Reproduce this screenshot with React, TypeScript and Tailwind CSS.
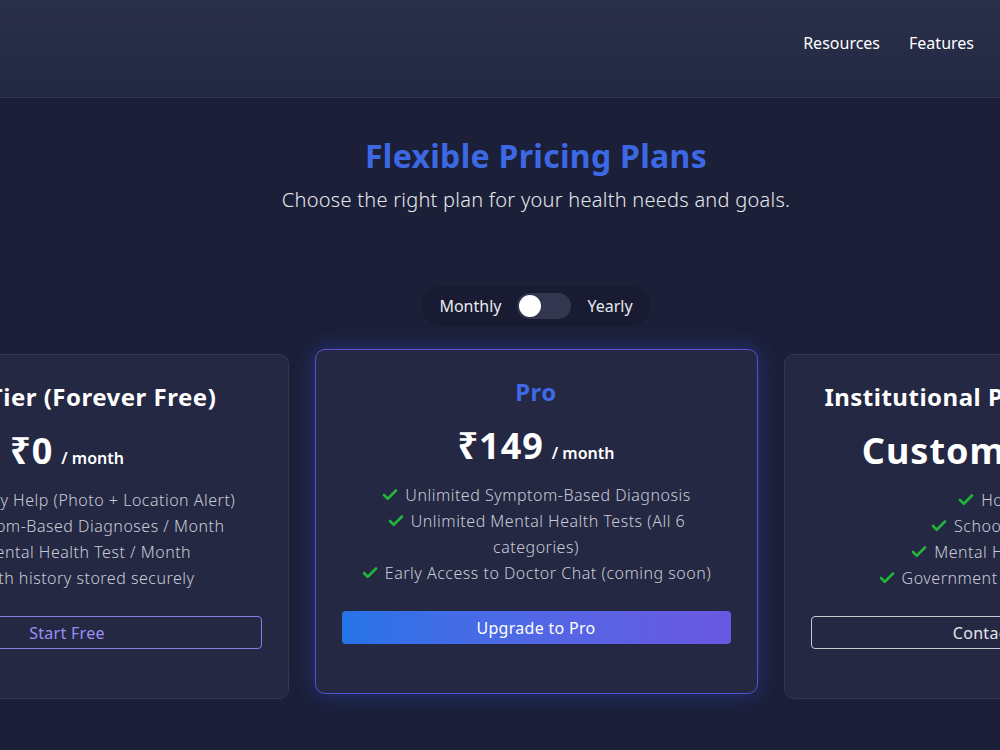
import { useState } from 'react'
import { Check } from 'lucide-react'

type Plan = {
  name: string
  price: string
  unit?: string
  features: string[]
  cta: string
  variant: 'free' | 'pro' | 'custom'
}

const PLANS: Plan[] = [
  {
    name: 'Basic Tier (Forever Free)',
    price: '₹0',
    unit: '/ month',
    features: [
      'Emergency Help (Photo + Location Alert)',
      '3 Symptom-Based Diagnoses / Month',
      '1 Mental Health Test / Month',
      'Health history stored securely',
    ],
    cta: 'Start Free',
    variant: 'free',
  },
  {
    name: 'Pro',
    price: '₹149',
    unit: '/ month',
    features: [
      'Unlimited Symptom-Based Diagnosis',
      'Unlimited Mental Health Tests (All 6 categories)',
      'Early Access to Doctor Chat (coming soon)',
    ],
    cta: 'Upgrade to Pro',
    variant: 'pro',
  },
  {
    name: 'Institutional Plan (B2B / B2G)',
    price: 'Custom pricing',
    features: ['Hospitals', 'Schools & NGOs', 'Mental Health Camps', 'Government Health Programs'],
    cta: 'Contact Sales',
    variant: 'custom',
  },
]

function PlanCard({ plan }: { plan: Plan }) {
  const isPro = plan.variant === 'pro'
  return (
    <div
      className={[
        'w-[443px] shrink-0 rounded-[10px] px-[26px] pt-[26px] pb-[49px] flex flex-col items-center',
        isPro
          ? 'bg-[#242843] border border-[#5a4fd6] -translate-y-[5px] shadow-[0_0_22px_rgba(45,80,200,0.45)]'
          : 'bg-[#242843] border border-[#33374f]',
      ].join(' ')}
    >
      <h3
        className={[
          'text-[24px] leading-8 font-bold whitespace-nowrap tracking-[0.5px]',
          isPro ? 'text-[#3e6ae6]' : 'text-white',
        ].join(' ')}
      >
        {plan.name}
      </h3>
      <div className="mt-4 h-[44px] flex items-baseline gap-2 whitespace-nowrap text-white">
        <span className="text-[36px] leading-[44px] font-bold tracking-[1px]">{plan.price}</span>
        {plan.unit && <span className="text-[16px] font-semibold">{plan.unit}</span>}
      </div>
      <ul className="mt-[14px] w-full px-3 text-center text-[16px] leading-[26px] font-light tracking-[0.5px] text-[#c9cbd6]">
        {plan.features.map((f) => (
          <li key={f}>
            <Check size={18} strokeWidth={3.5} className="inline-block text-[#22b33a] mr-1.5 -mt-1 align-middle" />
            {f}
          </li>
        ))}
      </ul>
      <button
        className={[
          'mt-[25px] w-full h-[33px] rounded text-[16px] tracking-[0.3px]',
          plan.variant === 'pro' && 'bg-gradient-to-r from-[#2474e8] to-[#6a58e2] text-white',
          plan.variant === 'free' && 'border border-[#8a7ce8] text-[#9d8ef5]',
          plan.variant === 'custom' && 'border border-[#c9cad2] text-[#e4e5ea]',
        ]
          .filter(Boolean)
          .join(' ')}
      >
        {plan.cta}
      </button>
    </div>
  )
}

export default function App() {
  const [yearly, setYearly] = useState(false)

  return (
    <div
      className="min-h-[750px] w-full overflow-hidden bg-[#1b1f38] text-white"
      style={{ fontFamily: '"Noto Sans", "Open Sans", sans-serif' }}
    >
      <header className="h-[98px] border-b border-[#30344f] bg-gradient-to-b from-[#2a2f4b] to-[#232842] flex items-center justify-end gap-[29px] pr-[26px] pb-[12px]">
        <a className="text-[16px] text-white">Resources</a>
        <a className="text-[16px] text-white">Features</a>
      </header>

      <section className="w-[1072px] flex flex-col items-center pb-16">
        <h2 className="mt-[38px] text-[32px] leading-10 font-bold tracking-[0.3px] text-[#3d68e4]">
          Flexible Pricing Plans
        </h2>
        <p className="mt-[10px] text-[20px] leading-7 font-light tracking-[0.25px] text-[#e6e7ee]">
          Choose the right plan for your health needs and goals.
        </p>

        <div className="mt-[72px] h-10 w-[230px] rounded-full bg-[#181b31] flex items-center justify-center gap-4 text-[16px] text-[#e8e9ef]">
          <span>Monthly</span>
          <button
            onClick={() => setYearly(!yearly)}
            className="w-[54px] h-[26px] rounded-full bg-[#33364f] p-[2px] flex items-center"
            aria-label="Toggle billing period"
          >
            <span
              className={[
                'w-[22px] h-[22px] rounded-full bg-white transition-transform',
                yearly ? 'translate-x-[28px]' : 'translate-x-0',
              ].join(' ')}
            />
          </button>
          <span>Yearly</span>
        </div>

        <div className="mt-[28px] flex justify-center gap-[26px]">
          {PLANS.map((p) => (
            <PlanCard key={p.name} plan={p} />
          ))}
        </div>
      </section>
    </div>
  )
}
